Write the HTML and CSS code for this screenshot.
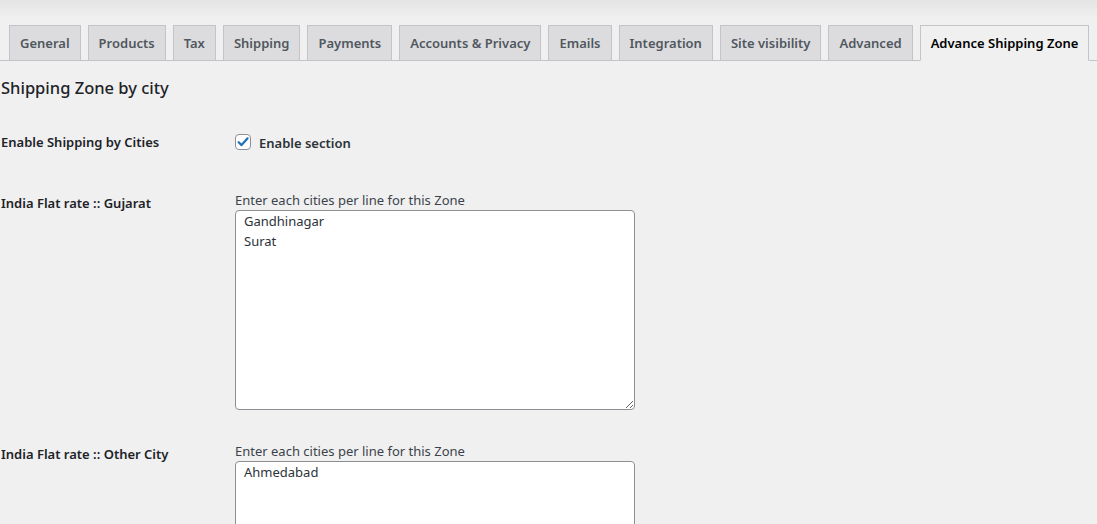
FILE: index.html
```html
<!DOCTYPE html>
<html lang="en">
<head>
<meta charset="utf-8">
<title>Advance Shipping Zone</title>
<link rel="stylesheet" href="styles.css">
</head>
<body>
<div class="wrap">
  <nav class="tabs">
    <a class="tab">General</a>
    <a class="tab">Products</a>
    <a class="tab">Tax</a>
    <a class="tab">Shipping</a>
    <a class="tab">Payments</a>
    <a class="tab">Accounts &amp; Privacy</a>
    <a class="tab">Emails</a>
    <a class="tab">Integration</a>
    <a class="tab">Site visibility</a>
    <a class="tab">Advanced</a>
    <a class="tab active">Advance Shipping Zone</a>
  </nav>
  <h2 class="title">Shipping Zone by city</h2>
  <div class="row row-check">
    <div class="th">Enable Shipping by Cities</div>
    <div class="td">
      <label class="check">
        <span class="box"><svg width="14" height="14" viewBox="0 0 14 14"><path d="M2.6 7.2 L5.6 10.1 L11.6 3.3" fill="none" stroke="#2271b1" stroke-width="2.2" stroke-linecap="round" stroke-linejoin="round"/></svg></span>
        <span class="check-text">Enable section</span>
      </label>
    </div>
  </div>
  <div class="row">
    <div class="th th-area">India Flat rate :: Gujarat</div>
    <div class="td">
      <p class="desc">Enter each cities per line for this Zone</p>
      <textarea class="area">Gandhinagar
Surat</textarea>
    </div>
  </div>
  <div class="row row-last">
    <div class="th th-area">India Flat rate :: Other City</div>
    <div class="td">
      <p class="desc">Enter each cities per line for this Zone</p>
      <textarea class="area">Ahmedabad</textarea>
    </div>
  </div>
</div>
</body>
</html>
```
FILE: styles.css
```css
* { box-sizing: border-box; }
html, body { margin: 0; padding: 0; }
body {
  background: linear-gradient(#e4e4e4 0, #f0f0f1 18px) #f0f0f1;
  background-repeat: no-repeat;
  font-family: "Noto Sans", "Open Sans", sans-serif;
  color: #1d2327;
  font-size: 13px;
  height: 524px;
  overflow: hidden;
}
.wrap { padding-top: 25px; }
.tabs {
  display: flex;
  align-items: flex-end;
  border-bottom: 1px solid #c3c4c7;
  padding-left: 2px;
}
.tab {
  margin-left: 7px;
  margin-bottom: -1px;
  padding: 5px 10px;
  border: 1px solid #c3c4c7;
  background: #dcdcde;
  color: #50575e;
  font-size: 13px;
  font-weight: 600;
  line-height: 24px;
  white-space: nowrap;
}
.tab.active {
  background: #f0f0f1;
  border-bottom-color: #f0f0f1;
  color: #000;
}
.title {
  margin: 15px 0 0 1px;
  font-size: 16.5px;
  line-height: 24px;
  font-weight: 500;
  color: #1d2327;
}
.row {
  display: grid;
  grid-template-columns: 235px 400px;
  padding-left: 1px;
}
.row-check { margin-top: 32px; }
.row + .row { margin-top: 39px; }
.row-last { margin-top: 32px !important; }
.th {
  font-weight: 600;
  font-size: 13px;
  line-height: 20px;
}
.th-area { padding-top: 2px; }
.td { margin-left: -1px; }
.check {
  display: flex;
  align-items: center;
  gap: 8px;
  height: 20px;
}
.box {
  width: 16px;
  height: 16px;
  border: 1px solid #8c8f94;
  border-radius: 4px;
  background: #fff;
  display: flex;
  align-items: center;
  justify-content: center;
}
.check-text {
  font-size: 13px;
  font-weight: 600;
  color: #2c3338;
  margin-top: 2px;
}
.desc {
  margin: 0 0 1px;
  padding-top: 1px;
  font-size: 13px;
  line-height: 17px;
  color: #3c434a;
}
.area {
  display: block;
  width: 400px;
  height: 200px;
  border: 1px solid #8c8f94;
  border-radius: 4px;
  background: #fff;
  padding: 0 8px;
  font-family: "Noto Sans", "Open Sans", sans-serif;
  font-size: 13px;
  line-height: 20px;
  color: #2c3338;
  resize: vertical;
  margin: 0;
}
```
